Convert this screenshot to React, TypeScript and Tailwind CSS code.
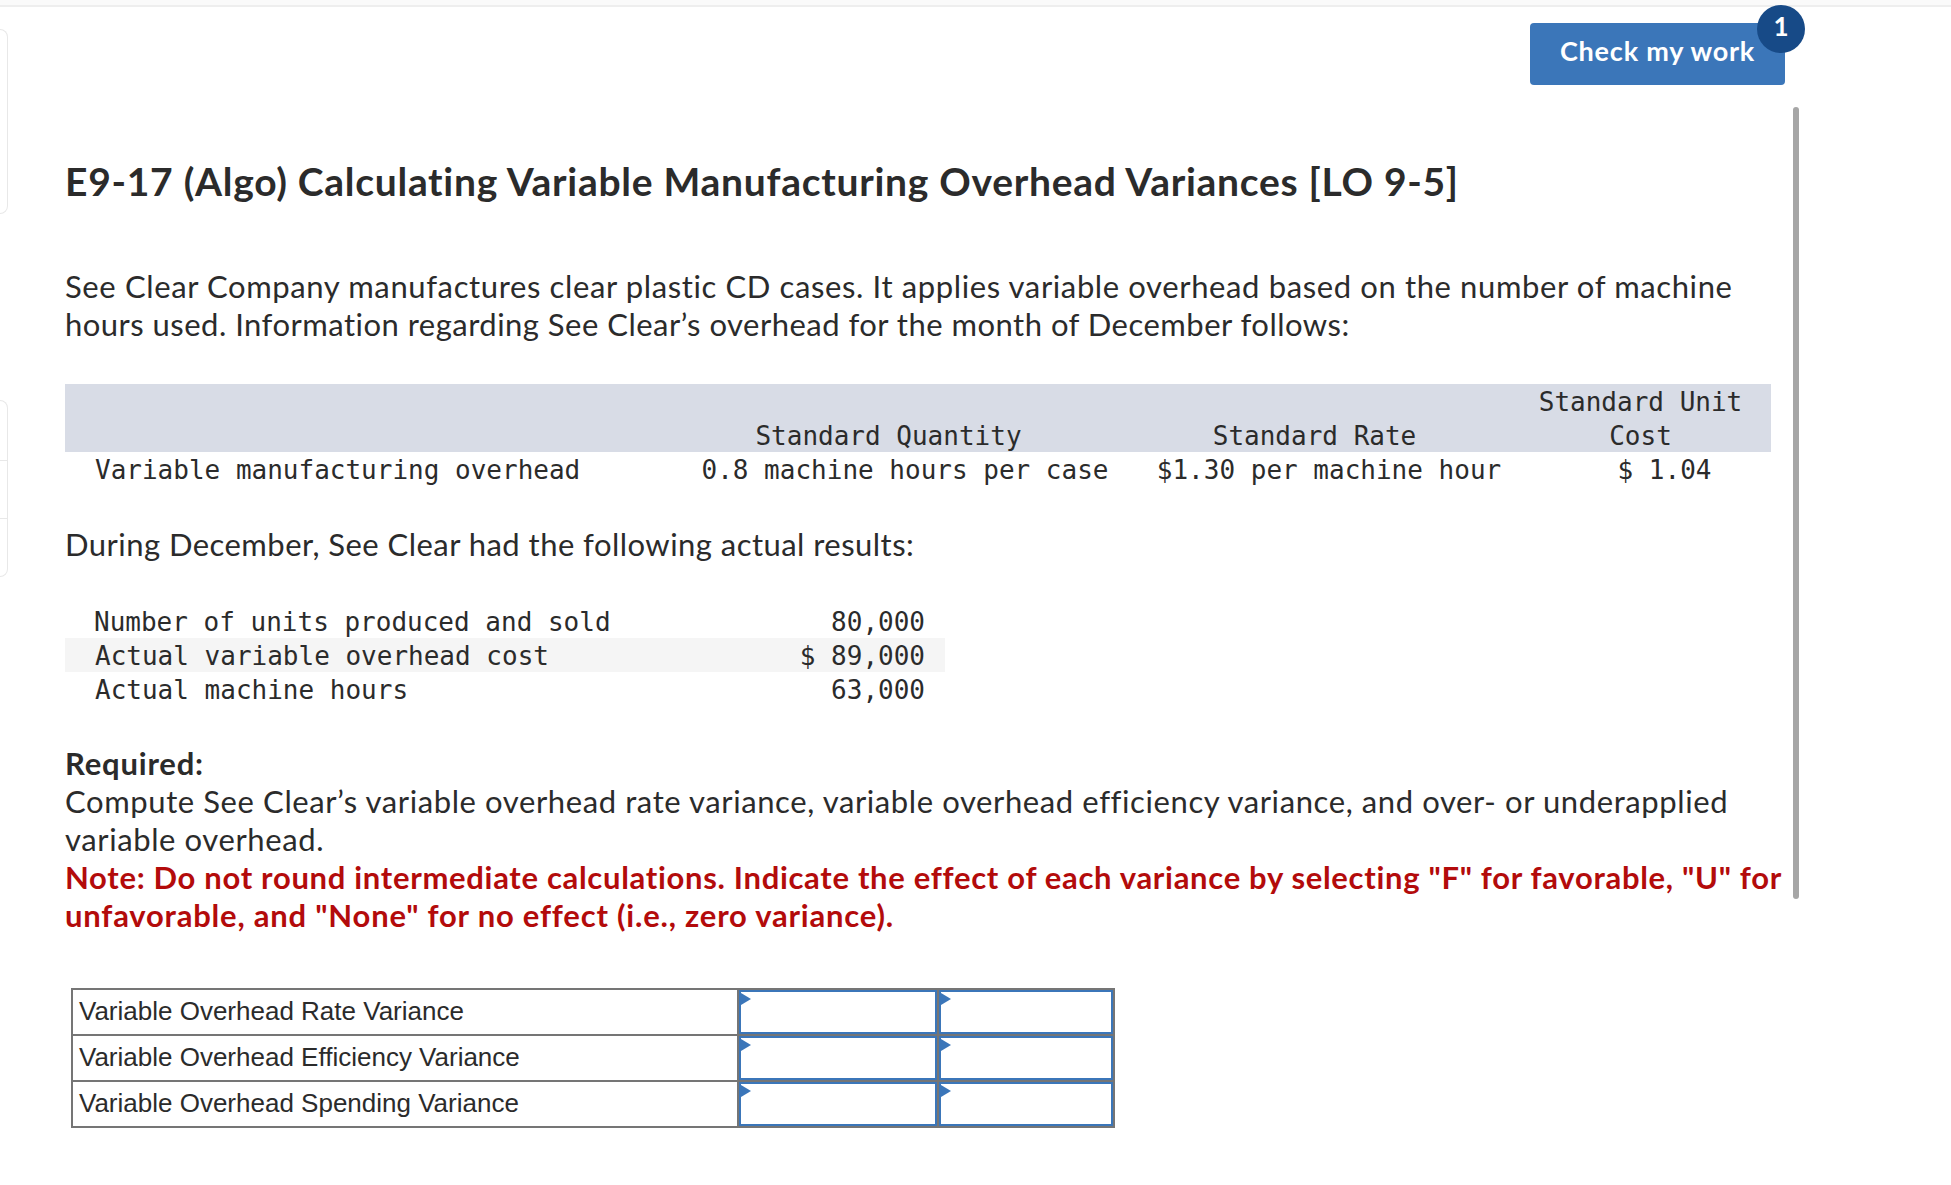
const body = "font-['Lato','Open_Sans',sans-serif]"

const standardRows = [
  { label: 'Number of units produced and sold', value: '80,000', shaded: false, pad: 'pl-[29px]' },
  { label: 'Actual variable overhead cost', value: '$ 89,000', shaded: true, pad: 'pl-[30px]' },
  { label: 'Actual machine hours', value: '63,000', shaded: false, pad: 'pl-[30px]' },
]

const variances = [
  'Variable Overhead Rate Variance',
  'Variable Overhead Efficiency Variance',
  'Variable Overhead Spending Variance',
]

const AnswerCell = () => (
  <td className="border-2 border-[#757575] p-0">
    <div className="relative h-[44px] border-2 border-[#3b76b9] bg-white">
      <svg className="absolute left-0 top-[1px]" width="10" height="12" viewBox="0 0 10 12">
        <path d="M0 0 L10 6 L0 12 Z" fill="#3b76b9" />
      </svg>
    </div>
  </td>
)

const App = () => {
  return (
    <div className="relative flex h-[1185px] w-[1951px] overflow-hidden bg-white text-[#2b2b2b]">
      {/* top edge of the frame */}
      <div className="absolute inset-x-0 top-0 h-[7px] border-b-2 border-[#eeeeee] bg-[#fafafa]" />

      {/* clipped side rail */}
      <div className="w-[8px] shrink-0">
        <div className="mt-[29px] h-[185px] rounded-r-lg border border-l-0 border-[#e8e8e8]" />
        <div className="mt-[186px] flex h-[177px] flex-col rounded-r-lg border border-l-0 border-[#e8e8e8]">
          <div className="h-[60px] border-b border-[#e8e8e8]" />
          <div className="h-[58px] border-b border-[#e8e8e8]" />
        </div>
      </div>

      <div className="relative ml-[57px] w-[1740px] pt-[23px]">
        <div className="flex justify-end pr-[20px]">
          <div className="relative">
            <button className={`${body} h-[62px] w-[255px] rounded-[4px] bg-[#3b76b9] pb-[5px] text-[27px] font-bold tracking-[0.8px] text-white`}>
              Check my work
            </button>
            <span className={`${body} absolute -right-[20px] -top-[18px] flex h-[48px] w-[48px] items-start justify-center rounded-full bg-[#174a87] pt-[2px] text-[26px] font-bold text-white`}>
              1
            </span>
          </div>
        </div>

        <h1 className={`${body} mt-[74px] text-[39px] font-bold leading-[45px] tracking-[0.72px] text-[#2b2b2b]`}>
          E9-17 (Algo) Calculating Variable Manufacturing Overhead Variances [LO 9-5]
        </h1>

        <p className={`${body} mt-[63px] text-[31px] leading-[38px] tracking-[0.62px]`}>
          See Clear Company manufactures clear plastic CD cases. It applies variable overhead based on the number of machine
          <br />
          <span className="tracking-[0.48px]">hours used. Information regarding See Clear’s overhead for the month of December follows:</span>
        </p>

        <div className="mt-[41px] w-[1706px] font-['DejaVu_Sans_Mono',monospace] text-[26px] leading-[34px]">
          <div className="grid h-[68px] grid-cols-[597px_453px_399px_257px] items-end bg-[#d8dce6] pt-px text-center">
            <div />
            <div>Standard Quantity</div>
            <div>Standard Rate</div>
            <div className="pr-[4px]">
              Standard Unit
              <br />
              Cost
            </div>
          </div>
          <div className="grid h-[34px] grid-cols-[597px_486px_362px_261px] pt-px text-center">
            <div className="pl-[30px] text-left">Variable manufacturing overhead</div>
            <div>0.8 machine hours per case</div>
            <div>$1.30 per machine hour</div>
            <div className="pl-[48px]">$ 1.04</div>
          </div>
        </div>

        <p className={`${body} mt-[39px] text-[31px] leading-[38px] tracking-[0.46px]`}>During December, See Clear had the following actual results:</p>

        <div className="mt-[41px] w-[880px] font-['DejaVu_Sans_Mono',monospace] text-[26px] leading-[34px]">
          {standardRows.map((row) => (
            <div key={row.label} className={`flex h-[34px] justify-between pr-[20px] pt-px ${row.pad} ${row.shaded ? 'bg-[#f5f5f5]' : ''}`}>
              <span>{row.label}</span>
              <span>{row.value}</span>
            </div>
          ))}
        </div>

        <div className={`${body} mt-[38px] text-[31px] leading-[38px] tracking-[0.6px]`}>
          <p className="font-bold tracking-[0.8px]">Required:</p>
          <p>
            Compute See Clear’s variable overhead rate variance, variable overhead efficiency variance, and over- or underapplied
            <br />
            variable overhead.
          </p>
          <p className="font-bold tracking-[0.69px] text-[#b30b0b]">
            Note: Do not round intermediate calculations. Indicate the effect of each variance by selecting "F" for favorable, "U" for
            <br />
            <span className="tracking-[0.79px]">unfavorable, and "None" for no effect (i.e., zero variance).</span>
          </p>
        </div>

        <table className="ml-[6px] mt-[54px] w-[1042px] table-fixed border-collapse font-['Liberation_Sans',Arial,sans-serif] text-[26px]">
          <colgroup>
            <col className="w-[666px]" />
            <col className="w-[200px]" />
            <col className="w-[176px]" />
          </colgroup>
          <tbody>
            {variances.map((name) => (
              <tr key={name} className="h-[46px]">
                <td className="border-2 border-[#757575] pb-[2px] pl-[6px]">{name}</td>
                <AnswerCell />
                <AnswerCell />
              </tr>
            ))}
          </tbody>
        </table>
      </div>

      {/* scrollbar thumb */}
      <div className="absolute left-[1793px] top-[107px] h-[792px] w-[6px] rounded-full bg-[#a6a6a6]" />
    </div>
  )
}

export default App
